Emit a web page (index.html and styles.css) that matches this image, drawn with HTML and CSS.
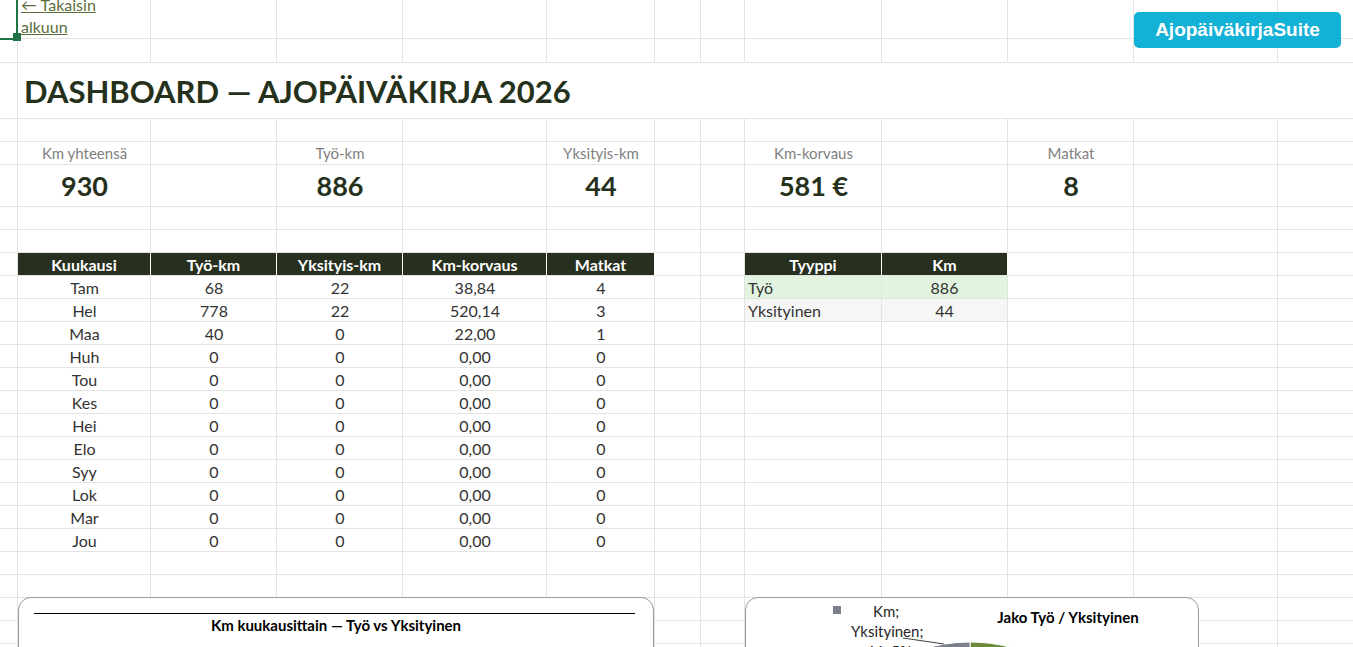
FILE: index.html
```html
<!DOCTYPE html>
<html lang="fi">
<head>
<meta charset="utf-8">
<title>Dashboard — Ajopäiväkirja 2026</title>
<link rel="stylesheet" href="styles.css">
</head>
<body>
<div class="sheet">

  <!-- row 1: back link -->
  <div class="row r1">
    <div class="cell col-b link-cell"><a class="back" href="#">← Takaisin alkuun</a></div>
  </div>
  <div class="row r2"></div>

  <!-- title -->
  <div class="row r-title">
    <div class="cell title">DASHBOARD — AJOPÄIVÄKIRJA 2026</div>
  </div>
  <div class="row"></div>

  <!-- key figures -->
  <div class="row">
    <div class="cell col-b kpi-label">Km yhteensä</div>
    <div class="cell col-d kpi-label">Työ-km</div>
    <div class="cell col-f kpi-label">Yksityis-km</div>
    <div class="cell col-i kpi-label">Km-korvaus</div>
    <div class="cell col-k kpi-label">Matkat</div>
  </div>
  <div class="row r-kpi">
    <div class="cell col-b kpi-value">930</div>
    <div class="cell col-d kpi-value">886</div>
    <div class="cell col-f kpi-value">44</div>
    <div class="cell col-i kpi-value">581 €</div>
    <div class="cell col-k kpi-value">8</div>
  </div>
  <div class="row"></div>
  <div class="row"></div>

  <!-- monthly table + type table -->
  <div class="row">
    <div class="cell col-b th">Kuukausi</div><div class="cell th">Työ-km</div><div class="cell th">Yksityis-km</div><div class="cell th">Km-korvaus</div><div class="cell th">Matkat</div>
    <div class="cell col-i th">Tyyppi</div><div class="cell th">Km</div>
  </div>
  <div class="row">
    <div class="cell col-b">Tam</div><div class="cell">68</div><div class="cell">22</div><div class="cell">38,84</div><div class="cell">4</div>
    <div class="cell col-i left work">Työ</div><div class="cell work">886</div>
  </div>
  <div class="row">
    <div class="cell col-b">Hel</div><div class="cell">778</div><div class="cell">22</div><div class="cell">520,14</div><div class="cell">3</div>
    <div class="cell col-i left private">Yksityinen</div><div class="cell private">44</div>
  </div>
  <div class="row">
    <div class="cell col-b">Maa</div><div class="cell">40</div><div class="cell">0</div><div class="cell">22,00</div><div class="cell">1</div>
  </div>
  <div class="row">
    <div class="cell col-b">Huh</div><div class="cell">0</div><div class="cell">0</div><div class="cell">0,00</div><div class="cell">0</div>
  </div>
  <div class="row">
    <div class="cell col-b">Tou</div><div class="cell">0</div><div class="cell">0</div><div class="cell">0,00</div><div class="cell">0</div>
  </div>
  <div class="row">
    <div class="cell col-b">Kes</div><div class="cell">0</div><div class="cell">0</div><div class="cell">0,00</div><div class="cell">0</div>
  </div>
  <div class="row">
    <div class="cell col-b">Hei</div><div class="cell">0</div><div class="cell">0</div><div class="cell">0,00</div><div class="cell">0</div>
  </div>
  <div class="row">
    <div class="cell col-b">Elo</div><div class="cell">0</div><div class="cell">0</div><div class="cell">0,00</div><div class="cell">0</div>
  </div>
  <div class="row">
    <div class="cell col-b">Syy</div><div class="cell">0</div><div class="cell">0</div><div class="cell">0,00</div><div class="cell">0</div>
  </div>
  <div class="row">
    <div class="cell col-b">Lok</div><div class="cell">0</div><div class="cell">0</div><div class="cell">0,00</div><div class="cell">0</div>
  </div>
  <div class="row">
    <div class="cell col-b">Mar</div><div class="cell">0</div><div class="cell">0</div><div class="cell">0,00</div><div class="cell">0</div>
  </div>
  <div class="row">
    <div class="cell col-b">Jou</div><div class="cell">0</div><div class="cell">0</div><div class="cell">0,00</div><div class="cell">0</div>
  </div>
  <div class="row"></div>
  <div class="row"></div>
  <div class="row"></div>
  <div class="row"></div>
  <div class="row"></div>

  <!-- active cell A1 -->
  <div class="selection"><div class="handle"></div></div>

  <div class="suite">AjopäiväkirjaSuite</div>

  <!-- charts -->
  <div class="chart chart-months">
    <div class="chart-rule"></div>
    <div class="chart-title">Km kuukausittain — Työ vs Yksityinen</div>
  </div>

  <div class="chart chart-split">
    <svg width="454" height="80" viewBox="0 0 454 80">
      <path d="M225 205 L225 45 A160 160 0 1 1 175.6 52.8 Z" fill="#6b8a3b" stroke="#fff" stroke-width="1"/>
      <path d="M225 205 L225 45 A160 160 0 0 0 175.6 52.8 Z" fill="#7b808c" stroke="#fff" stroke-width="1"/>
      <line x1="158" y1="41" x2="199" y2="47" stroke="#404040" stroke-width="1"/>
      <rect x="88" y="9" width="8" height="8" fill="#7b808c"/>
      <text x="128" y="20" class="pie-label">Km;</text>
      <text x="106" y="40" class="pie-label">Yksityinen;</text>
      <text x="121" y="60" class="pie-label">44; 5%</text>
      <text x="323" y="26" class="pie-title" text-anchor="middle">Jako Työ / Yksityinen</text>
    </svg>
  </div>

</div>
</body>
</html>
```

FILE: styles.css
```css
body {
	margin: 0;
	overflow: hidden;
	background: #fff;
	font-family: Lato, "Noto Sans", sans-serif;
	color: #333;
}

.sheet {
	position: relative;
	width: 1353px;
	height: 647px;
	overflow: hidden;
}

/* every sheet row shares the column widths; gridlines are drawn by the row background */
.row {
	display: grid;
	grid-template-columns: 18px 133px 126px 126px 144px 108px 46px 44px 137px 126px 126px 144px 1fr;
	grid-template-rows: minmax(0, 1fr);
	height: 23px;
	box-sizing: border-box;
	border-bottom: 1px solid #e3e3e3;
	background: linear-gradient(to right,
		transparent 0 17px, #e3e3e3 17px 18px,
		transparent 18px 150px, #e3e3e3 150px 151px,
		transparent 151px 276px, #e3e3e3 276px 277px,
		transparent 277px 402px, #e3e3e3 402px 403px,
		transparent 403px 546px, #e3e3e3 546px 547px,
		transparent 547px 654px, #e3e3e3 654px 655px,
		transparent 655px 700px, #e3e3e3 700px 701px,
		transparent 701px 744px, #e3e3e3 744px 745px,
		transparent 745px 881px, #e3e3e3 881px 882px,
		transparent 882px 1007px, #e3e3e3 1007px 1008px,
		transparent 1008px 1133px, #e3e3e3 1133px 1134px,
		transparent 1134px 1277px, #e3e3e3 1277px 1278px,
		transparent 1278px);
}
.r1 { height: 39px; }
.r2 { height: 24px; }
.r-kpi { height: 42px; }
.r-title {
	height: 56px;
	background: linear-gradient(to right, transparent 0 17px, #e3e3e3 17px 18px, transparent 18px);
}

.cell {
	display: flex;
	align-items: center;
	justify-content: center;
	white-space: nowrap;
	font-size: 16px;
	min-width: 0;
}
.col-b { grid-column: 2; }
.col-d { grid-column: 4; }
.col-f { grid-column: 6; }
.col-i { grid-column: 9; }
.col-k { grid-column: 11; }
.left {
	justify-content: flex-start;
	padding-left: 3px;
}

/* two wrapped lines, bottom aligned: the first line runs off the top edge */
.link-cell {
	align-items: flex-end;
	justify-content: flex-start;
	padding-left: 3px;
}
.back {
	flex: none;
	width: 100px;
	white-space: normal;
	line-height: 22px;
	font-size: 16px;
	color: #5c6e3a;
}

.title {
	grid-column: 2 / -1;
	justify-content: flex-start;
	padding-left: 6px;
	font-size: 31px;
	font-weight: 700;
	color: #26311b;
	background: #fff;
}

.kpi-label {
	font-size: 15px;
	color: #7f7f7f;
}
.kpi-value {
	font-size: 27px;
	font-weight: 700;
	color: #26311b;
}

.th {
	background: #27301f;
	color: #fff;
	font-weight: 700;
	border-right: 1px solid #fff;
}
.work {
	background: #e2f4df;
	border-right: 1px solid #e3e3e3;
}
.private {
	background: #f6f6f6;
	border-right: 1px solid #e3e3e3;
}

.selection {
	position: absolute;
	left: 0;
	top: 0;
	width: 16px;
	height: 38px;
	border-right: 2px solid #217346;
	border-bottom: 2px solid #217346;
}
.handle {
	position: absolute;
	left: 13px;
	top: 33px;
	width: 8px;
	height: 8px;
	background: #217346;
}

.suite {
	position: absolute;
	left: 1134px;
	top: 12px;
	width: 207px;
	height: 36px;
	display: flex;
	align-items: center;
	justify-content: center;
	border-radius: 5px;
	background: #14b1d6;
	color: #fff;
	font-family: "Liberation Sans", Arial, sans-serif;
	font-size: 19px;
	font-weight: 700;
}

.chart {
	position: absolute;
	top: 597px;
	height: 120px;
	box-sizing: border-box;
	border: 1px solid #9c9c9c;
	border-radius: 13px;
	background: #fff;
	overflow: hidden;
}
.chart-months {
	left: 18px;
	width: 636px;
}
.chart-split {
	left: 745px;
	width: 454px;
}
.chart-rule {
	margin: 15px 18px 0 15px;
	border-top: 1px solid #000;
}
.chart-title {
	margin-top: 2px;
	text-align: center;
	font-size: 15px;
	font-weight: 700;
	color: #000;
}
.chart-split svg {
	display: block;
	margin: -1px 0 0 -1px;
}
.pie-label {
	font-family: Lato, sans-serif;
	font-size: 15px;
	fill: #262626;
}
.pie-title {
	font-family: Lato, sans-serif;
	font-size: 15px;
	font-weight: 700;
	fill: #000;
}
```
